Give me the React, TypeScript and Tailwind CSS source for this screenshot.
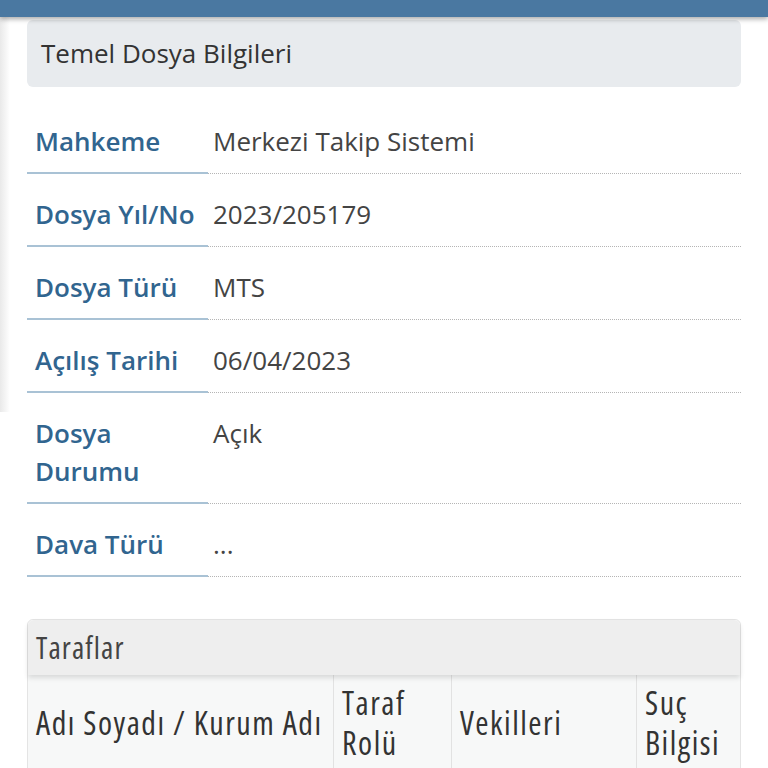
import React from 'react';

const rows: { label: string; value: string }[] = [
  { label: 'Mahkeme', value: 'Merkezi Takip Sistemi' },
  { label: 'Dosya Yıl/No', value: '2023/205179' },
  { label: 'Dosya Türü', value: 'MTS' },
  { label: 'Açılış Tarihi', value: '06/04/2023' },
  { label: 'Dosya Durumu', value: 'Açık' },
  { label: 'Dava Türü', value: '...' },
];

export default function App() {
  return (
    <div className="relative min-h-screen w-[768px] overflow-hidden bg-white font-['Open_Sans',sans-serif]">
      <div className="relative z-10 h-[17px] bg-[#4a78a1] shadow-[0_2px_5px_rgba(0,0,0,0.35)]" />
      <div className="pointer-events-none absolute left-0 top-[17px] h-[395px] w-[10px] bg-gradient-to-r from-[#e9e9e9] to-white" />

      <div className="relative px-[27px] pt-[3px]">
        <div className="flex h-[67px] items-center rounded-md bg-[#e8ebee] pl-[14px] text-[26px] text-[#333]">
          Temel Dosya Bilgileri
        </div>

        <div className="mt-[14px]">
          {rows.map((r) => (
            <div key={r.label} className="grid grid-cols-[181px_1fr]">
              <div className="border-b-2 border-[#a9c2d5] pt-[21px] pb-[12px] pl-[8px] pr-2 text-[26px] font-semibold leading-[38px] text-[#31658f]">
                {r.label === 'Dosya Durumu' ? (
                  <>
                    Dosya
                    <br />
                    Durumu
                  </>
                ) : (
                  r.label
                )}
              </div>
              <div className="border-b border-dotted border-[#b5b5b5] pt-[21px] pb-[12px] pl-[5px] text-[26px] leading-[38px] text-[#444]">
                {r.value}
              </div>
            </div>
          ))}
        </div>

        <div className="mt-[42px] rounded-t-md border border-[#e4e4e4]">
          <div className="relative z-10 flex h-[55px] items-center rounded-t-md bg-[#eeeeee] pl-[8px] text-[30px] tracking-[1.1px] text-[#444] shadow-[0_3px_5px_rgba(0,0,0,0.12)] [font-stretch:87.5%]">
            Taraflar
          </div>
          <div className="grid grid-cols-[305px_118px_185px_1fr] bg-[#f7f8f8] text-[32px] leading-[40px] tracking-[1.5px] text-[#333] [font-stretch:87.5%]">
            <div className="flex items-center whitespace-nowrap py-[8px] pl-[8px]">Adı Soyadı / Kurum Adı</div>
            <div className="border-l border-[#e2e2e2] py-[8px] pl-[8px]">
              Taraf
              <br />
              Rolü
            </div>
            <div className="flex items-center border-l border-[#e2e2e2] py-[8px] pl-[8px]">Vekilleri</div>
            <div className="border-l border-[#e2e2e2] py-[8px] pl-[8px]">
              Suç
              <br />
              Bilgisi
            </div>
          </div>
        </div>
      </div>
    </div>
  );
}
